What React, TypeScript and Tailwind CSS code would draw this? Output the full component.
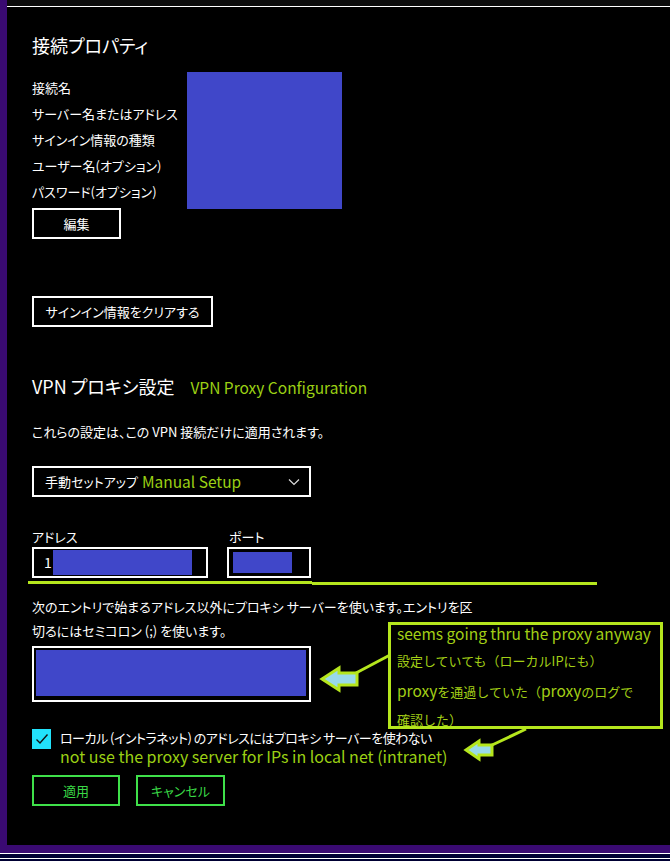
import React from "react";

const JP = "font-['Noto_Sans_CJK_JP','Noto_Sans',sans-serif] [font-feature-settings:'palt']";

function Label({ children }: { children: React.ReactNode }) {
  return <div className="h-[26px] whitespace-nowrap text-[13px] leading-[26px] text-white">{children}</div>;
}

function Btn({ children, w, green }: { children: React.ReactNode; w: string; green?: boolean }) {
  return (
    <div
      className={`${w} flex h-[31px] items-center justify-center whitespace-nowrap border-2 text-[13px] ${
        green ? "border-[#3fe04a] text-[#3ad846]" : "border-white text-white"
      }`}
    >
      {children}
    </div>
  );
}

// callout arrows, drawn over the page
function Arrows() {
  return (
    <svg className="pointer-events-none absolute left-0 top-0" width={670} height={861}>
      <line x1={356} y1={673} x2={390} y2={655} stroke="#b5e61d" strokeWidth={3} />
      <polygon
        points="322,679 339,668 339,673 357,673 357,685 339,685 339,690"
        fill="#99d9ea"
        stroke="#b5e61d"
        strokeWidth={3}
      />
      <line x1={490} y1={746} x2={526} y2={729} stroke="#b5e61d" strokeWidth={3} />
      <polygon
        points="466,750 479,741 479,745 492,745 492,755 479,755 479,759"
        fill="#99d9ea"
        stroke="#b5e61d"
        strokeWidth={3}
      />
    </svg>
  );
}

export default function App() {
  return (
    <div className={`relative flex h-[861px] w-[670px] flex-col overflow-hidden bg-black ${JP}`}>
      <div className="flex flex-1">
        <div className="w-[7px] bg-[#3a0a72]" />
        <div className="flex flex-1 flex-col">
          <div className="h-[6px] bg-[#0b0b0b]" />
          <div className="h-px bg-white" />
          <div className="flex flex-col pl-[25px]">
            <div className="mt-[24px] text-[18px] leading-[28px] text-white">接続プロパティ</div>

            <div className="mt-[13px] flex">
              <div className="flex w-[155px] flex-col pt-[3px]">
                <Label>接続名</Label>
                <Label>サーバー名またはアドレス</Label>
                <Label>サインイン情報の種類</Label>
                <Label>ユーザー名(オプション)</Label>
                <Label>パスワード(オプション)</Label>
                <div className="mt-[3px]">
                  <Btn w="w-[89px]">編集</Btn>
                </div>
              </div>
              <div className="h-[137px] w-[155px] bg-[#4047c9]" />
            </div>

            <div className="mt-[57px]">
              <Btn w="w-[181px]">サインイン情報をクリアする</Btn>
            </div>

            <div className="mt-[45px] flex items-baseline leading-[28px]">
              <span className="text-[18px] text-white">VPN プロキシ設定</span>
              <span className="ml-[16px] text-[15.5px] text-[#9bd014]">VPN Proxy Configuration</span>
            </div>

            <div className="mt-[21px] text-[13px] leading-[20px] text-white">
              これらの設定は、この VPN 接続だけに適用されます。
            </div>

            <div className="mt-[24px] flex h-[31px] w-[279px] items-center border-2 border-white pl-[11px] pr-[9px] text-[13px]">
              <span className="text-white">手動セットアップ</span>
              <span className="ml-[4px] text-[15.5px] text-[#9bd014]">Manual Setup</span>
              <svg className="ml-auto" width={12} height={8} viewBox="0 0 12 8">
                <polyline points="1,1.5 6,6.5 11,1.5" fill="none" stroke="#ddd" strokeWidth={1.2} />
              </svg>
            </div>

            <div className="mt-[30px] flex gap-[19px]">
              <div className="flex w-[176px] flex-col">
                <div className="text-[13px] leading-[20px] text-white">アドレス</div>
                <div className="flex h-[31px] items-center border-2 border-white pl-[10px] pr-[14px]">
                  <span className="text-[14px] text-white">1</span>
                  <div className="ml-[1px] h-[25px] flex-1 bg-[#4047c9]" />
                </div>
              </div>
              <div className="flex w-[84px] flex-col">
                <div className="pl-[2px] text-[13px] leading-[20px] text-white">ポート</div>
                <div className="flex h-[31px] items-center border-2 border-white pl-[4px] pr-[17px]">
                  <div className="h-[21px] flex-1 bg-[#4047c9]" />
                </div>
              </div>
            </div>

            <div className="mt-[17px] text-[13px] leading-[24px] text-white">
              <div>次のエントリで始まるアドレス以外にプロキシ サーバーを使います。エントリを区</div>
              <div>切るにはセミコロン (;) を使います。</div>
            </div>

            <div className="mt-[3px] h-[56px] w-[279px] border-2 border-white p-[2px] pb-[4px] pr-[3px]">
              <div className="h-full w-full bg-[#4047c9]" />
            </div>

            <div className="mt-[27px] flex">
              <div className="flex h-[20px] w-[19px] items-center justify-center bg-[#22e2fb]">
                <svg width={14} height={12} viewBox="0 0 14 12">
                  <polyline points="1.5,6.5 5,10 12.5,1.5" fill="none" stroke="#111" strokeWidth={1.4} />
                </svg>
              </div>
              <div className="ml-[9px] flex flex-col">
                <span className="text-[13px] leading-[17px] tracking-[-0.5px] text-white">
                  ローカル (イントラネット) のアドレスにはプロキシ サーバーを使わない
                </span>
                <span className="text-[16px] leading-[20px] text-[#9bd014]">
                  not use the proxy server for IPs in local net (intranet)
                </span>
              </div>
            </div>

            <div className="mt-[9px] flex gap-[16px]">
              <Btn w="w-[88px]" green>
                適用
              </Btn>
              <Btn w="w-[89px]" green>
                キャンセル
              </Btn>
            </div>
          </div>
        </div>
      </div>

      <div className="h-[8px] bg-[#3a0a72]" />
      <div className="h-px bg-white" />
      <div className="h-[4px] bg-[#000033]" />
      <div className="h-px bg-white" />
      <div className="h-[2px] bg-[#000033]" />

      {/* annotation overlays */}
      <div className="absolute left-[28px] top-[581px] h-[3px] w-[284px] bg-[#b5e61d]" />
      <div className="absolute left-[312px] top-[582px] h-[3px] w-[285px] bg-[#b5e61d]" />

      <div className="absolute left-[388px] top-[622px] h-[107px] w-[275px] border-[3px] border-[#b5e61d] bg-black pl-[6px]">
        <div className="-mt-[6px] whitespace-nowrap text-[13px] leading-[28.3px] text-[#a3cf16] [font-feature-settings:normal]">
          <div className="text-[15.5px]">seems going thru the proxy anyway</div>
          <div>設定していても（ローカルIPにも）</div>
          <div>
            <span className="text-[15.5px]">proxy</span>を通過していた（<span className="text-[15.5px]">proxy</span>のログで
          </div>
          <div>確認した）</div>
        </div>
      </div>

      <Arrows />
    </div>
  );
}
